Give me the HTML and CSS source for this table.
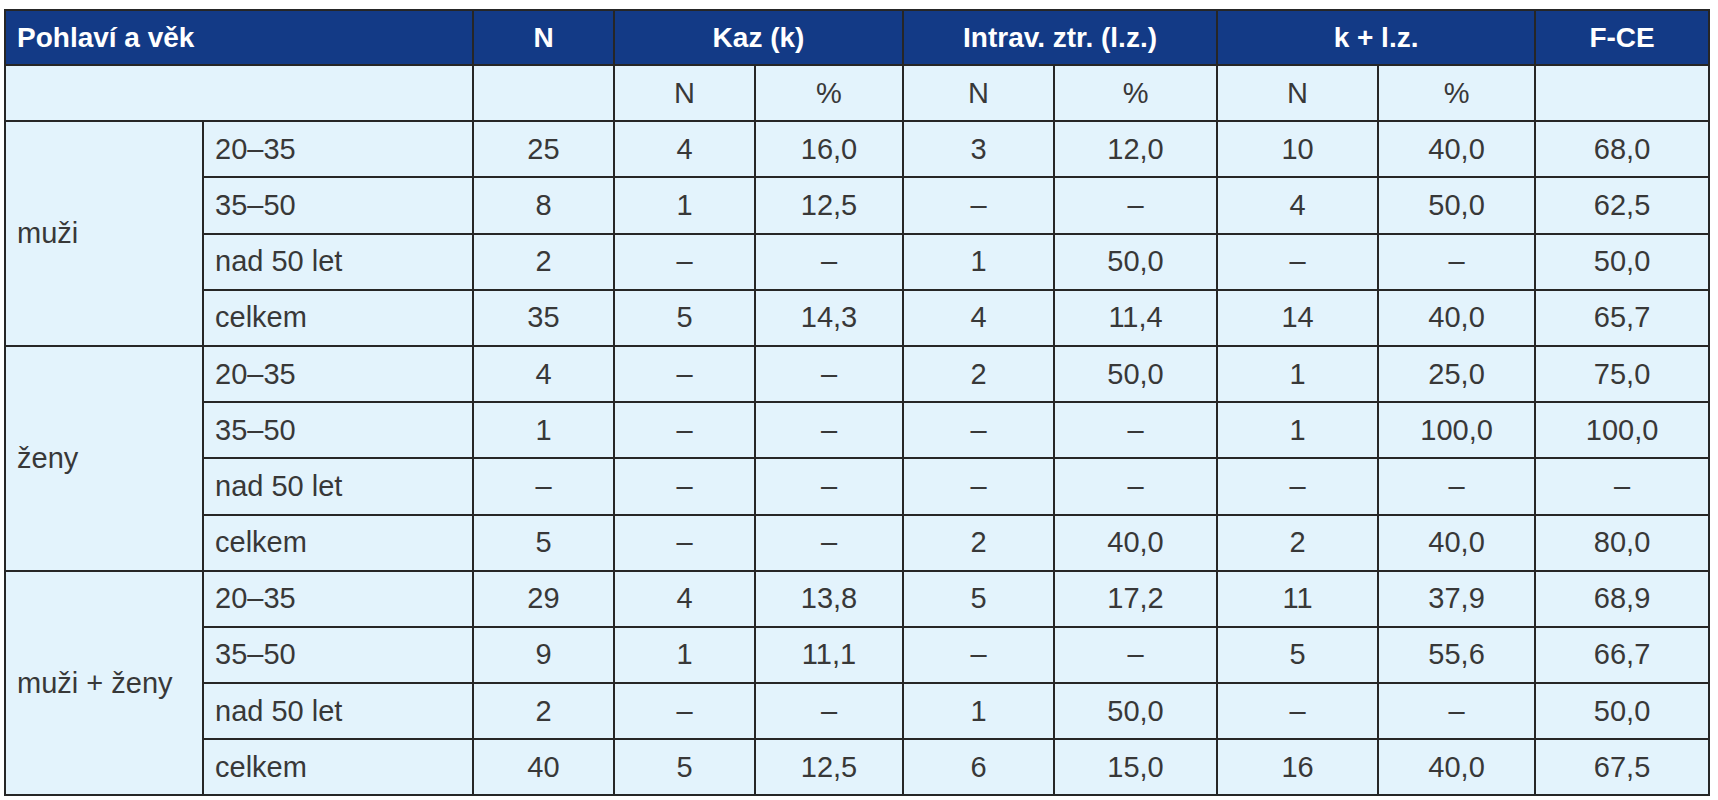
FILE: index.html
```html
<!DOCTYPE html>
<html lang="cs">
<head>
<meta charset="utf-8">
<title>Tabulka</title>
<link rel="stylesheet" href="styles.css">
</head>
<body>
<div class="wrap">
<table class="data">
  <colgroup>
    <col class="c-group"><col class="c-age"><col class="c-n">
    <col class="c-kn"><col class="c-kp"><col class="c-in"><col class="c-ip">
    <col class="c-sn"><col class="c-sp"><col class="c-fce">
  </colgroup>
  <thead>
    <tr class="head">
      <th colspan="2" class="left">Pohlaví a věk</th>
      <th>N</th>
      <th colspan="2">Kaz (k)</th>
      <th colspan="2">Intrav. ztr. (l.z.)</th>
      <th colspan="2">k + l.z.</th>
      <th>F-CE</th>
    </tr>
  </thead>
  <tbody>
    <tr>
      <td colspan="2"></td><td></td>
      <td>N</td><td>%</td><td>N</td><td>%</td><td>N</td><td>%</td><td></td>
    </tr>
    <tr>
      <td rowspan="4" class="left">muži</td>
      <td class="left">20–35</td><td>25</td><td>4</td><td>16,0</td><td>3</td><td>12,0</td><td>10</td><td>40,0</td><td>68,0</td>
    </tr>
    <tr>
      <td class="left">35–50</td><td>8</td><td>1</td><td>12,5</td><td>–</td><td>–</td><td>4</td><td>50,0</td><td>62,5</td>
    </tr>
    <tr>
      <td class="left">nad 50 let</td><td>2</td><td>–</td><td>–</td><td>1</td><td>50,0</td><td>–</td><td>–</td><td>50,0</td>
    </tr>
    <tr>
      <td class="left">celkem</td><td>35</td><td>5</td><td>14,3</td><td>4</td><td>11,4</td><td>14</td><td>40,0</td><td>65,7</td>
    </tr>
    <tr>
      <td rowspan="4" class="left">ženy</td>
      <td class="left">20–35</td><td>4</td><td>–</td><td>–</td><td>2</td><td>50,0</td><td>1</td><td>25,0</td><td>75,0</td>
    </tr>
    <tr>
      <td class="left">35–50</td><td>1</td><td>–</td><td>–</td><td>–</td><td>–</td><td>1</td><td>100,0</td><td>100,0</td>
    </tr>
    <tr>
      <td class="left">nad 50 let</td><td>–</td><td>–</td><td>–</td><td>–</td><td>–</td><td>–</td><td>–</td><td>–</td>
    </tr>
    <tr>
      <td class="left">celkem</td><td>5</td><td>–</td><td>–</td><td>2</td><td>40,0</td><td>2</td><td>40,0</td><td>80,0</td>
    </tr>
    <tr>
      <td rowspan="4" class="left">muži + ženy</td>
      <td class="left">20–35</td><td>29</td><td>4</td><td>13,8</td><td>5</td><td>17,2</td><td>11</td><td>37,9</td><td>68,9</td>
    </tr>
    <tr>
      <td class="left">35–50</td><td>9</td><td>1</td><td>11,1</td><td>–</td><td>–</td><td>5</td><td>55,6</td><td>66,7</td>
    </tr>
    <tr>
      <td class="left">nad 50 let</td><td>2</td><td>–</td><td>–</td><td>1</td><td>50,0</td><td>–</td><td>–</td><td>50,0</td>
    </tr>
    <tr>
      <td class="left">celkem</td><td>40</td><td>5</td><td>12,5</td><td>6</td><td>15,0</td><td>16</td><td>40,0</td><td>67,5</td>
    </tr>
  </tbody>
</table>
</div>
</body>
</html>
```
FILE: styles.css
```css
html, body {
  margin: 0;
  padding: 0;
  background: #ffffff;
}

.wrap {
  padding: 9px 0 0 4px;
}

.data {
  border-collapse: collapse;
  table-layout: fixed;
  width: 1706px;
  font-family: "Liberation Sans", Arial, sans-serif;
  font-size: 29px;
  color: #383838;
  border: 2px solid #262626;
}

.c-group { width: 198px; }
.c-age { width: 270px; }
.c-n { width: 141px; }
.c-kn { width: 141px; }
.c-kp { width: 148px; }
.c-in { width: 151px; }
.c-ip { width: 163px; }
.c-sn { width: 161px; }
.c-sp { width: 157px; }
.c-fce { width: 174px; }

.data th,
.data td {
  border: 2px solid #262626;
  text-align: center;
  vertical-align: middle;
  padding: 0 11px;
  height: 54.2px;
  white-space: nowrap;
}

.data td {
  background: #e3f3fc;
  font-weight: normal;
}

.data th {
  background: #133a86;
  color: #ffffff;
  font-weight: bold;
  font-size: 28px;
  height: 53px;
}

.data .left {
  text-align: left;
}
```
